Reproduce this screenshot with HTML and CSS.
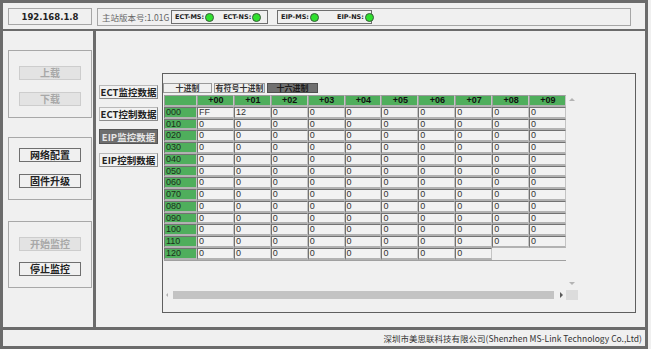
FILE: index.html
```html
<!DOCTYPE html>
<html lang="zh-CN">
<head>
  <meta charset="UTF-8" />
  <title>MS-Link 主站监控</title>
  <link rel="stylesheet" href="styles.css">
</head>
<body>
  <div class="window">
    <div class="topbar">
      <div class="ip-box">192.168.1.8</div>
      <div class="status-box">
        <span class="version">主站版本号:1.01G</span>
        <div class="led-box ect">
          <span class="led-label">ECT-MS:</span><span class="led"></span>
          <span class="led-label second">ECT-NS:</span><span class="led"></span>
        </div>
        <div class="led-box eip">
          <span class="led-label">EIP-MS:</span><span class="led"></span>
          <span class="led-label second wide">EIP-NS:</span><span class="led"></span>
        </div>
      </div>
    </div>

    <div class="middle">
      <div class="left-panel">
        <div class="group group-load">
          <button class="btn" disabled>上载</button>
          <button class="btn" disabled>下载</button>
        </div>
        <div class="group group-config">
          <button class="btn">网络配置</button>
          <button class="btn">固件升级</button>
        </div>
        <div class="group group-monitor">
          <button class="btn" disabled>开始监控</button>
          <button class="btn">停止监控</button>
        </div>
      </div>

      <div class="main-panel">
        <div class="side-tabs">
          <button class="side-btn">ECT监控数据</button>
          <button class="side-btn">ECT控制数据</button>
          <button class="side-btn active">EIP监控数据</button>
          <button class="side-btn last">EIP控制数据</button>
        </div>

        <div class="frame">
          <div class="tabs">
            <button class="tab t1">十进制</button>
            <button class="tab t2">有符号十进制</button>
            <button class="tab t3 active">十六进制</button>
          </div>
          <div class="view">
            <div class="grid-wrap">
              <div class="grid" id="grid"></div>
            </div>
            <div class="vscroll">
              <span class="arrow-up"></span>
              <span class="arrow-down"></span>
            </div>
            <div class="hscroll">
              <span class="arrow-left"></span>
              <span class="thumb"></span>
              <span class="arrow-right"></span>
            </div>
            <div class="corner"></div>
          </div>
        </div>
      </div>
    </div>

    <div class="footer">深圳市美思联科技有限公司(Shenzhen MS-Link Technology Co.,Ltd)</div>
  </div>

  <script>
    const grid = document.getElementById("grid");
    const data = new Array(128).fill("0");
    data[0] = "FF";
    data[1] = "12";

    function cell(cls, text) {
      const div = document.createElement("div");
      div.className = cls;
      div.textContent = text;
      grid.appendChild(div);
    }

    cell("hd", "");
    for (let c = 0; c < 10; c++) {
      cell("hd", "+0" + c);
    }

    for (let r = 0; r < 13; r++) {
      cell("rl", String(r * 10).padStart(3, "0"));
      for (let c = 0; c < 10; c++) {
        const i = r * 10 + c;
        if (i >= data.length) break;
        cell("c", data[i]);
      }
    }
  </script>
</body>
</html>
```

FILE: styles.css
```css
body {
  margin: 0;
  background-color: #f0f0f0;
  font-family: "Noto Sans CJK SC", "Noto Sans", sans-serif;
}

.window {
  width: 648px;
  height: 349px;
  box-sizing: border-box;
  border: 3px solid #6b6b6b;
  background: #f0f0f0;
  display: flex;
  flex-direction: column;
}

/* top bar */
.topbar {
  height: 28px;
  box-sizing: border-box;
  border-bottom: 2px solid #6b6b6b;
  padding: 5px 0 0 5px;
  display: flex;
  align-items: flex-start;
}

.ip-box {
  width: 84px;
  height: 17px;
  box-sizing: border-box;
  border: 1px solid #a6a6a6;
  font-family: "DejaVu Sans", sans-serif;
  font-weight: bold;
  font-size: 8.5px;
  color: #222;
  display: flex;
  align-items: center;
  justify-content: center;
}

.status-box {
  width: 534px;
  height: 18px;
  margin-left: 5px;
  box-sizing: border-box;
  border: 1px solid #a6a6a6;
  padding-left: 4px;
  display: flex;
  align-items: center;
}

.version {
  font-size: 8.5px;
  color: #666;
  width: 66px;
  flex-shrink: 0;
  white-space: nowrap;
}

.led-box {
  height: 14px;
  box-sizing: border-box;
  border: 1px solid #6e6e6e;
  display: flex;
  align-items: center;
  padding-left: 3px;
  flex-shrink: 0;
}

.led-box.ect {
  width: 97px;
  margin-left: 3px;
}

.led-box.eip {
  width: 95px;
  margin-left: 9px;
}

.led-label {
  font-family: "DejaVu Sans", sans-serif;
  font-weight: bold;
  font-size: 6.5px;
  color: #222;
  white-space: nowrap;
  flex-shrink: 0;
}

.led-label.second {
  margin-left: 9px;
}

.led-label.wide {
  margin-left: 18px;
}

.led {
  width: 7px;
  height: 7px;
  flex-shrink: 0;
  border-radius: 50%;
  border: 1px solid #3a5a3a;
  background: #2fe02f;
  margin-left: 1px;
}

/* middle area */
.middle {
  height: 299px;
  box-sizing: border-box;
  border-bottom: 3px solid #6b6b6b;
  display: flex;
}

.left-panel {
  width: 93px;
  box-sizing: border-box;
  border-right: 3px solid #6b6b6b;
  padding-left: 5px;
}

.group {
  width: 84px;
  box-sizing: border-box;
  border: 1px solid #a8a8a8;
  display: flex;
  flex-direction: column;
  align-items: flex-start;
  padding-left: 10px;
}

.group-load {
  margin-top: 19px;
  height: 68px;
  padding-top: 15px;
  gap: 12px;
}

.group-config {
  margin-top: 19px;
  height: 63px;
  padding-top: 10px;
  gap: 12px;
}

.group-monitor {
  margin-top: 21px;
  height: 67px;
  padding-top: 15px;
  gap: 11px;
}

.btn {
  width: 62px;
  height: 14px;
  padding: 0;
  border: 1px solid #6f6f6f;
  background: #f0f0f0;
  font-family: "Noto Sans CJK SC", sans-serif;
  font-weight: bold;
  font-size: 10px;
  line-height: 12px;
  color: #222;
}

.btn:disabled {
  border-color: #cdcdcd;
  background: #e3e3e3;
  color: #a8a8a8;
}

.main-panel {
  flex: 1;
  display: flex;
  align-items: flex-start;
  padding-left: 3px;
}

.side-tabs {
  margin-top: 54px;
  width: 59px;
  display: flex;
  flex-direction: column;
  gap: 8px;
}

.side-btn {
  width: 59px;
  height: 14px;
  padding: 0;
  border: 1px solid #b9b9b9;
  border-right-color: #8c8c8c;
  border-bottom-color: #8c8c8c;
  background: #f2f2f2;
  font-family: "Noto Sans CJK SC", sans-serif;
  font-weight: bold;
  font-size: 9.5px;
  line-height: 12px;
  color: #222;
  white-space: nowrap;
}

.side-btn.active {
  background: #6e6e6e;
  border-color: #555;
  color: #e6e6e6;
  height: 15px;
}

.side-btn.last {
  margin-top: 1px;
}

/* data frame */
.frame {
  margin-left: 4px;
  margin-top: 42px;
  width: 474px;
  height: 240px;
  box-sizing: border-box;
  border: 1px solid #5f5f5f;
  padding-top: 9px;
}

.tabs {
  display: flex;
  gap: 2px;
  height: 10px;
}

.tab {
  height: 10px;
  padding: 0;
  border: 1px solid #9a9a9a;
  background: #f0f0f0;
  font-family: "Noto Sans CJK SC", sans-serif;
  font-weight: bold;
  font-size: 8px;
  line-height: 8px;
  color: #333;
}

.tab.t1 { width: 49px; }
.tab.t2 { width: 51px; }
.tab.t3 { width: 51px; }

.tab.active {
  background: #707070;
  border-color: #505050;
  color: #1a1a1a;
}

.view {
  margin-top: 2px;
  margin-left: 1px;
  display: grid;
  grid-template-columns: 402px 12px;
  grid-template-rows: 195px 10px;
}

.grid-wrap {
  width: 402px;
}

.grid {
  display: grid;
  grid-template-columns: 33px repeat(10, 36.9px);
  grid-auto-rows: 11.75px;
  border-bottom: 1px solid #a0a0a0;
  width: 402px;
}

.grid > div {
  box-sizing: border-box;
  border-top: 1px solid #727272;
  border-left: 1px solid #727272;
  border-right: 1px solid #c4c4c4;
  border-bottom: 2px solid #b2b2b2;
  font-family: "Liberation Sans", sans-serif;
  font-size: 9px;
  line-height: 9px;
  padding-left: 1px;
  overflow: hidden;
  white-space: nowrap;
}

.grid .hd {
  background: #4fae5c;
  border-top-color: #9c9c9c;
  border-left-color: #9c9c9c;
  font-weight: bold;
  color: #111;
  text-align: center;
}

.grid .rl {
  background: #4fae5c;
  color: #1b2f1b;
}

.grid .c {
  background: #f2f2f2;
  color: #333;
}

.vscroll {
  display: flex;
  flex-direction: column;
  justify-content: space-between;
  align-items: center;
  padding: 3px 0 5px;
}

.arrow-up {
  width: 0;
  height: 0;
  border-left: 3px solid transparent;
  border-right: 3px solid transparent;
  border-bottom: 3px solid #b4b4b4;
}

.arrow-down {
  width: 0;
  height: 0;
  border-left: 3px solid transparent;
  border-right: 3px solid transparent;
  border-top: 3px solid #b4b4b4;
}

.hscroll {
  display: flex;
  align-items: center;
}

.arrow-left {
  width: 0;
  height: 0;
  margin-left: 2px;
  border-top: 2px solid transparent;
  border-bottom: 2px solid transparent;
  border-right: 2px solid #b0b0b0;
}

.thumb {
  width: 381px;
  height: 8px;
  margin-left: 5px;
  background: #c3c3c3;
}

.arrow-right {
  width: 0;
  height: 0;
  margin-left: 6px;
  border-top: 3px solid transparent;
  border-bottom: 3px solid transparent;
  border-left: 3px solid #5a5a5a;
}

.corner {
  background: #dcdcdc;
}

.footer {
  height: 16px;
  line-height: 16px;
  text-align: right;
  padding-right: 3px;
  font-size: 8.5px;
  color: #333;
  white-space: nowrap;
}
```
